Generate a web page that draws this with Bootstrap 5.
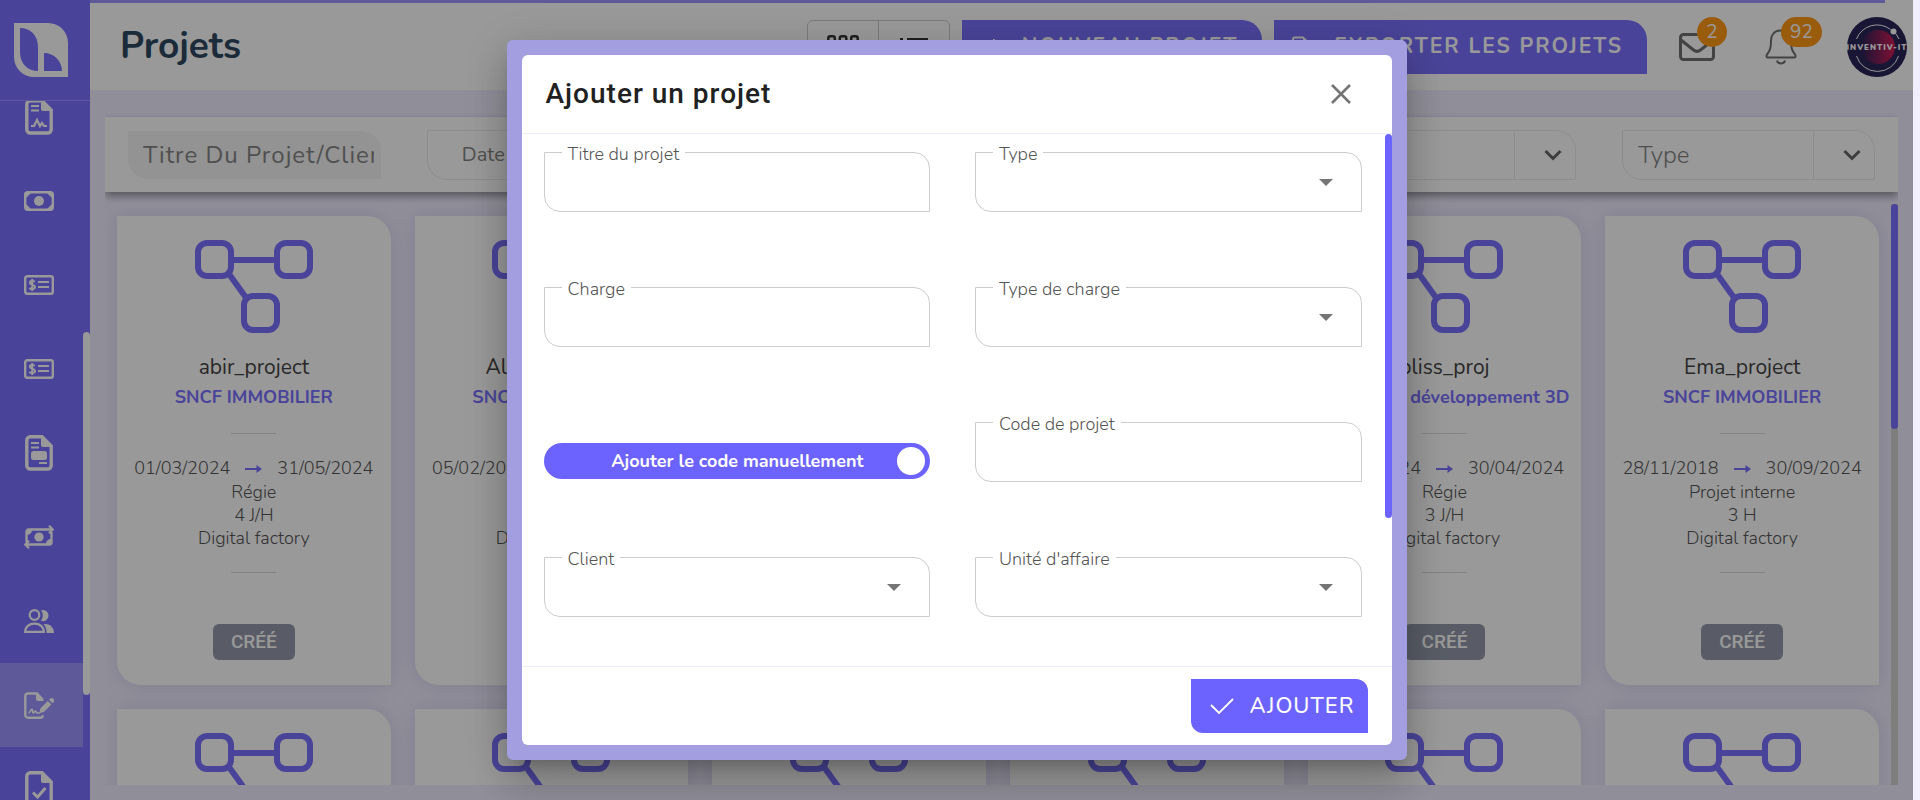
<!DOCTYPE html>
<html lang="fr">
<head>
<meta charset="utf-8">
<meta name="viewport" content="width=device-width, initial-scale=1">
<title>Projets</title>
<link href="https://cdn.jsdelivr.net/npm/bootstrap@5.3.0/dist/css/bootstrap.min.css" rel="stylesheet">
<style>
:root { --brand: #7b71ff; --brand-strong: #6c63ff; --lilac: #f0eeff; --leaf: 20px; }
body { font-family: Nunito, Lato, sans-serif; font-weight: 300; background: var(--lilac); padding-right: 7px; color: #555; }
.leaf { border-radius: 0 var(--leaf) 0 var(--leaf); }

/* sidebar */
.side { width: 90px; background: var(--brand); color: #fff; }
.side-logo { height: 102px; border-bottom: 1px solid #9d94ff; padding: 23px 14px; }
.side-scroll { min-height: 0; }
.side-list { margin-top: -26px; }
.side-list a { height: 84px; padding-right: 5px; color: #fff; }
.side-list a.active { background: #9d94ff; }
.side-track { width: 7px; padding-top: 231px; }
.side-thumb { height: 363px; border-radius: 4px; background: #fff; }

/* top bar */
.page { min-width: 0; }
.loading { height: 3px; margin-right: 28px; background: #9d94ff; }
.top { height: 87px; padding: 0 6px 0 30px; }
.top h1 { font-size: 37px; font-weight: 700; color: #2f4961; }
.views { height: 54px; }
.views .btn { width: 72px; border: 1px solid #ccc; color: #333; }
.act { height: 54px; padding: 0 24px 0 18px; border: 0; background: var(--brand); color: #fff; font-size: 21px; font-weight: 700; letter-spacing: 2px; }
.act svg { margin-right: 14px; }
.alert-btn { width: 36px; height: 60px; color: #707070; }
.count { top: 0; left: 18px; height: 30px; min-width: 30px; padding: 0 9px; border-radius: 15px; background: #ff9917; color: #fff; font-size: 19px; line-height: 30px; font-weight: 400; }

/* filters */
.content { min-height: 0; padding: 27px 15px 0; }
.filters { height: 75px; box-shadow: 0 4px 8px rgba(0,0,0,.4); clip-path: inset(-4px 0 -16px 0); z-index: 1; }
.filters .col { padding: 0 23px; }
.filters input, .filters .pick { height: 50px; border: 1px solid #ebebeb; background: #fff; }
.filters input { color: #777; font-size: 20px; padding: 0 34px; }
.filters input.search { height: 48px; border: 0; background: #f5f5f5; font-size: 24px; letter-spacing: 1px; padding: 0 7px 0 15px; }
.filters ::placeholder { color: #858585; opacity: 1; }
.pick select { border: 0; background: none; appearance: none; font-size: 24px; color: #858585; padding-left: 15px; font-weight: 300; }
.pick span { width: 61px; border-left: 1px solid #ebebeb; color: #666; pointer-events: none; }

/* project cards */
.board { padding-bottom: 15px; min-height: 0; }
.grid-clip { overflow: hidden; min-width: 0; padding-top: 12px; }
.proj-row { --bs-gutter-y: 0px; row-gap: 24px; }
.proj { height: 469px; background: #fff; border-radius: 0 24px 0 24px; box-shadow: 0 0 20px rgba(80,70,140,.16); padding-top: 24px; color: #555; font-size: 18px; line-height: 23px; }
.proj h2 { font-size: 21px; line-height: 24px; font-weight: 400; color: #444; margin: 22px 0 6px; }
.proj .firm { font-weight: 700; line-height: 24px; }
.proj .firm, .proj svg { color: var(--brand); }
.proj hr { width: 45px; margin: 24px auto 23px; border-color: #666; }
.proj hr.low { margin-top: 22px; }
.proj .dates { margin-bottom: 1px; gap: 15px; }
.proj .state { background: #949aaa; color: #fff; font: 500 19px/36px Roboto, sans-serif; border-radius: 6px; padding: 0 18px; margin-top: 28px; }
.track { width: 7px; background: #d2d2cf; flex-shrink: 0; }
.track div { height: 225px; border-radius: 4px; background: var(--brand); }

/* dialog */
.shade { background: rgba(0,0,0,.4); right: 7px; width: auto; z-index: 1050; }
.dlg { width: 900px; max-width: 100%; height: 90vh; border: 15px solid #a39edf; border-radius: 6px; background: #a39edf; box-shadow: 0 11px 15px -7px rgba(0,0,0,.2), 0 24px 38px 3px rgba(0,0,0,.14), 0 9px 46px 8px rgba(0,0,0,.12); }
.sheet { background: #fff; border-radius: 6px; }
.dlg-head { height: 79px; padding: 0 37px 0 24px; border-bottom: 1px solid #ededfb; }
.dlg-head h2 { font: 500 28px/36px Roboto, sans-serif; letter-spacing: 1px; color: #212121; }
.dlg-body { min-height: 0; overflow: hidden; }
.fields { padding: 18px 23px 0 22px; column-gap: 45px; row-gap: 75px; display: grid; grid-template-columns: 1fr 1fr; align-content: start; }
.field { height: 60px; }
.field input, .field select { height: 60px; border: 1px solid #ccc; border-radius: 0 16px 0 16px; background: #fff; font-size: 20px; padding: 0 20px; appearance: none; }
.field label { top: -9px; left: 18px; padding: 0 6px; background: #fff; font-size: 18px; line-height: 22px; color: #555; }
.field.drop::after { content: ""; position: absolute; right: 29px; top: 27px; border: 7px solid transparent; border-top-color: #757575; border-bottom: 0; }
.switch { height: 36px; border-radius: 18px; background: var(--brand-strong); color: #fff; font-size: 18px; font-weight: 700; margin-top: 21px; padding: 0 5px 0 34px; cursor: pointer; }
.switch input { appearance: none; width: 28px; height: 28px; border-radius: 50%; background: #fff; margin: 0; }
.dlg-track { width: 7px; flex-shrink: 0; }
.dlg-thumb { height: 384px; border-radius: 4px; background: var(--brand-strong); }
.dlg-foot { height: 79px; padding-right: 24px; border-top: 1px solid #ededfb; }
.dlg-foot .btn { height: 54px; border-radius: 0 12px 0 12px; background: var(--brand-strong); color: #fff; font-size: 22px; font-weight: 500; letter-spacing: 1px; padding: 0 13px 0 19px; border: 0; }
</style>
</head>
<body class="vh-100 overflow-hidden">
<svg class="d-none">
  <symbol id="i-net" viewBox="0 0 118 93"><g fill="none" stroke="currentColor" stroke-width="6"><rect x="3" y="3" width="33" height="33" rx="9"/><rect x="82" y="3" width="33" height="33" rx="9"/><rect x="49" y="56" width="33" height="34" rx="9"/><path d="M37 20h44M34 34l18 25"/></g></symbol>
  <symbol id="i-arrow" viewBox="0 0 17 8"><path d="M0 4h13" stroke="currentColor" stroke-width="2"/><path d="M11.500 0L17 4l-5.500 4z" fill="currentColor"/></symbol>
  <symbol id="i-down" viewBox="0 0 18 12"><path d="M1.500 2L9 9.500 16.500 2" fill="none" stroke="currentColor" stroke-width="3"/></symbol>
  <symbol id="i-page" viewBox="0 0 28 36"><path d="M4 1.800h13l9.200 9.200v19.500a3.500 3.500 0 0 1-3.500 3.500H5.300a3.500 3.500 0 0 1-3.500-3.500V5.300A3.500 3.500 0 0 1 5.300 1.800z" fill="none" stroke="currentColor" stroke-width="3.400"/><path d="M16 1.500V10a2 2 0 0 0 2 2h9z" fill="currentColor"/></symbol>
  <symbol id="i-cheque" viewBox="0 0 30 20"><rect x="1.200" y="1.200" width="27.600" height="17.600" rx="2" fill="none" stroke="currentColor" stroke-width="2.400"/><path d="M10.800 6.800C9.500 5.700 5.800 5.500 5.800 7.800c0 2.500 5.200 1.600 5.200 4.200 0 2.400-4 2.400-5.700 1M8.200 4v12M14 7h11M14 12h11" fill="none" stroke="currentColor" stroke-width="2"/></symbol>
</svg>

<div class="d-flex h-100">
  <nav class="side d-flex flex-column flex-shrink-0" aria-label="Menu">
    <a class="side-logo d-block text-white" href="#" aria-label="Accueil"><svg width="54" height="54" viewBox="0 0 54 54"><path fill="currentColor" fill-rule="evenodd" d="M0 0h34a20 20 0 0 1 20 20v34H20A20 20 0 0 1 0 34zM6 5v24c0 12 8 19 18 19V24C24 12 16 5 6 5zM30 30v18h18c0-10-8-18-18-18z"/></svg></a>
    <div class="side-scroll d-flex flex-grow-1 overflow-hidden">
      <div class="side-list flex-grow-1">
        <a href="#" aria-label="Contrats" class="d-flex align-items-center justify-content-center"><svg width="28" height="36" viewBox="0 0 28 36"><use href="#i-page"/><path d="M6 7h8M6 11.500h8M6 27h3l3-6 3 6 2-3 2 3h3" fill="none" stroke="currentColor" stroke-width="2.200"/></svg></a>
        <a href="#" aria-label="Factures" class="d-flex align-items-center justify-content-center"><svg width="30" height="20" viewBox="0 0 30 20"><rect x="1.200" y="1.200" width="27.600" height="17.600" rx="2.500" fill="none" stroke="currentColor" stroke-width="2.400"/><circle cx="15" cy="10" r="5" fill="currentColor"/><path d="M2 2h5l-5 5zM28 2h-5l5 5zM2 18h5l-5-5zM28 18h-5l5-5z" fill="currentColor"/></svg></a>
        <a href="#" aria-label="Paiements" class="d-flex align-items-center justify-content-center"><svg width="30" height="20"><use href="#i-cheque"/></svg></a>
        <a href="#" aria-label="Chèques" class="d-flex align-items-center justify-content-center"><svg width="30" height="20"><use href="#i-cheque"/></svg></a>
        <a href="#" aria-label="Devis" class="d-flex align-items-center justify-content-center"><svg width="28" height="36" viewBox="0 0 28 36"><use href="#i-page"/><path d="M6 8h8M6 12.500h8M14 28h8" fill="none" stroke="currentColor" stroke-width="2.200"/><rect x="6" y="16" width="16" height="9" rx="2.500" fill="currentColor"/></svg></a>
        <a href="#" aria-label="Virements" class="d-flex align-items-center justify-content-center"><svg width="30" height="24" viewBox="0 0 30 24"><g fill="none" stroke="currentColor" stroke-width="2.300"><path d="M2.500 17V6.500a2 2 0 0 1 2-2H29M25 .8L28.700 4.500 25 8.200M27.500 7v10.500a2 2 0 0 1-2 2H1M5 15.800L1.300 19.500 5 23.200"/></g><circle cx="15" cy="12" r="4.600" fill="currentColor"/><path d="M3 5h5a5 5 0 0 1-5 5zM27 19h-5a5 5 0 0 1 5-5z" fill="currentColor"/></svg></a>
        <a href="#" aria-label="Équipe" class="d-flex align-items-center justify-content-center"><svg width="30" height="24" viewBox="0 0 30 24"><g fill="none" stroke="currentColor" stroke-width="2.200"><circle cx="10.500" cy="6" r="4.800"/><path d="M1.200 22.800c0-5 4-8.200 9.300-8.200s9.300 3.200 9.300 8.200z"/></g><path d="M17 1.500a5.500 5.500 0 1 1 0 10.200 8 8 0 0 0 0-10.200zM19.500 15c6-.6 10.500 2.800 10.500 9h-7.500c.2-4-1-7-3-9z" fill="currentColor"/></svg></a>
        <a href="#" aria-label="Projets" class="active d-flex align-items-center justify-content-center"><svg width="30" height="27" viewBox="0 0 30 27"><path d="M19 8l-6-6.500H4A2.700 2.700 0 0 0 1.300 4v19A2.700 2.700 0 0 0 4 25.700h12.500a2.500 2.500 0 0 0 2.300-2.500" fill="none" stroke="currentColor" stroke-width="2.400"/><path d="M12 1v6a2 2 0 0 0 2 2h6zM15.500 21l.8-4.500 7.500-7.500 3.600 3.600-7.500 7.500zM25 7.800l1-1a2.300 2.300 0 0 1 3.400 3.400l-1 1z" fill="currentColor"/><path d="M4.500 21c1.500 0 2.500-4 3.500-4s0 4 1.200 4 1-2 2-2 .8 2 2 2h3" fill="none" stroke="currentColor" stroke-width="1.600"/></svg></a>
        <a href="#" aria-label="Validations" class="d-flex align-items-center justify-content-center"><svg width="28" height="36" viewBox="0 0 28 36"><use href="#i-page"/><path d="M8 21.500l4.500 4.500 8-9" fill="none" stroke="currentColor" stroke-width="3"/></svg></a>
      </div>
      <div class="side-track"><div class="side-thumb"></div></div>
    </div>
  </nav>

  <div class="page d-flex flex-column flex-grow-1 h-100">
    <header class="bg-white">
      <div class="loading"></div>
      <div class="top d-flex align-items-center">
        <h1 class="m-0 me-auto">Projets</h1>
        <div class="views btn-group me-2 pe-1">
          <button class="btn" type="button" aria-label="Grille"><svg width="32" height="32" viewBox="0 0 32 32" fill="none" stroke="currentColor" stroke-width="2.500"><rect x="1.300" y="5.300" width="6.500" height="9" rx="2"/><rect x="12.800" y="5.300" width="6.500" height="9" rx="2"/><rect x="24.200" y="5.300" width="6.500" height="9" rx="2"/><rect x="1.300" y="19" width="6.500" height="9" rx="2"/><rect x="12.800" y="19" width="6.500" height="9" rx="2"/><rect x="24.200" y="19" width="6.500" height="9" rx="2"/></svg></button>
          <button class="btn" type="button" aria-label="Liste"><svg width="28" height="24" viewBox="0 0 28 24" stroke="currentColor" stroke-width="4"><path d="M0 5h3M7 5h21M0 13h3M7 13h21M0 21h3M7 21h21"/></svg></button>
        </div>
        <button class="act leaf me-2" type="button"><svg width="28" height="18" viewBox="0 0 28 18" stroke="currentColor" stroke-width="2"><path d="M14 0v18M5 9h18"/></svg>NOUVEAU PROJET</button>
        <button class="act leaf ms-1 me-4" type="button"><svg width="28" height="24" viewBox="0 0 28 24"><path d="M2.500 1.500H11l5.500 5.500v13.500a2 2 0 0 1-2 2h-12a1.500 1.500 0 0 1-1.500-1.500V3a1.500 1.500 0 0 1 1.500-1.500z" fill="none" stroke="currentColor" stroke-width="2"/><path d="M11 1v6h6z" fill="currentColor"/></svg>EXPORTER LES PROJETS</button>
        <button class="alert-btn btn p-0 border-0 position-relative ms-2 me-5" type="button" aria-label="Messages"><svg width="36" height="28" viewBox="0 0 36 28" fill="none" stroke="currentColor" stroke-width="3"><rect x="1.500" y="1.500" width="33" height="25" rx="3"/><path d="M2 7l12.500 10c2.500 2 4.500 2 7 0L34 7"/></svg><span class="count position-absolute">2</span></button>
        <button class="alert-btn btn p-0 border-0 position-relative me-5" type="button" aria-label="Notifications"><svg width="32" height="36" viewBox="0 0 32 36" fill="none" stroke="currentColor" stroke-width="2"><path d="M16 1.500C9 1.500 6 6.500 6 12c0 8-1.500 10-4 13.500-1 1.500-.5 3 1 3h26c1.500 0 2-1.500 1-3-2.500-3.500-4-5.500-4-13.500 0-5.500-3-10.500-10-10.500zM12 31.500c1 4 7 4 8 0"/></svg><span class="count position-absolute">92</span></button>
        <a href="#" aria-label="Compte"><svg class="d-block" width="60" height="60" viewBox="0 0 60 60"><defs><linearGradient id="g"><stop offset="0" stop-color="#2a2358"/><stop offset="1" stop-color="#d21b55"/></linearGradient></defs><circle cx="30" cy="30" r="30" fill="#2a2358"/><circle cx="31" cy="30" r="17" fill="url(#g)"/><path d="M9.500 22a22 22 0 0 1 34-9.500M49 17l3 5M9.500 39a22 22 0 0 0 42 0" fill="none" stroke="#fff" stroke-width="1"/><circle cx="46.500" cy="14.500" r="3" fill="#fff"/><text x="30" y="33" text-anchor="middle" fill="#fff" font-size="8" font-weight="900" letter-spacing="1">INVENTIV-IT</text></svg></a>
      </div>
    </header>

    <main class="content d-flex flex-column flex-grow-1">
      <form class="filters bg-white d-flex align-items-center flex-shrink-0 position-relative">
        <div class="col"><input class="search leaf w-100" type="text" placeholder="Titre Du Projet/Client" aria-label="Titre du projet ou client"></div>
        <div class="col"><input class="leaf w-100" type="text" placeholder="Date de début" aria-label="Date de début"></div>
        <div class="col"><input class="leaf w-100" type="text" placeholder="Date de fin" aria-label="Date de fin"></div>
        <div class="col"><div class="pick leaf d-flex"><select class="flex-grow-1" aria-label="Client"><option>Client</option></select><span class="d-flex align-items-center justify-content-center ps-3"><svg width="18" height="12"><use href="#i-down"/></svg></span></div></div>
        <div class="col"><div class="pick leaf d-flex"><select class="flex-grow-1" aria-label="Statut"><option>Statut</option></select><span class="d-flex align-items-center justify-content-center ps-3"><svg width="18" height="12"><use href="#i-down"/></svg></span></div></div>
        <div class="col"><div class="pick leaf d-flex"><select class="flex-grow-1" aria-label="Type"><option>Type</option></select><span class="d-flex align-items-center justify-content-center ps-3"><svg width="18" height="12"><use href="#i-down"/></svg></span></div></div>
      </form>
      <div class="board d-flex flex-grow-1 pt-2 mt-1">
        <div class="grid-clip flex-grow-1"><div class="proj-row row row-cols-6 g-4 m-0" id="grid"></div></div>
        <div class="track"><div></div></div>
      </div>
    </main>
  </div>
</div>

<div class="shade modal d-flex align-items-center justify-content-center" role="dialog" aria-modal="true" aria-labelledby="dlgTitle">
  <div class="dlg">
    <form class="sheet d-flex flex-column h-100">
      <div class="dlg-head d-flex align-items-center justify-content-between flex-shrink-0">
        <h2 id="dlgTitle" class="m-0">Ajouter un projet</h2>
        <button class="btn p-1 border-0" type="button" aria-label="Fermer"><svg class="d-block" width="20" height="20" viewBox="0 0 20 20"><path d="M1 1l18 18M19 1L1 19" stroke="#757575" stroke-width="2.600"/></svg></button>
      </div>
      <div class="dlg-body d-flex flex-grow-1">
        <div class="fields flex-grow-1">
          <div class="field position-relative"><input class="w-100" id="f1" type="text"><label class="position-absolute" for="f1">Titre du projet</label></div>
          <div class="field drop position-relative"><select class="w-100" id="f2"><option></option></select><label class="position-absolute" for="f2">Type</label></div>
          <div class="field position-relative"><input class="w-100" id="f3" type="text"><label class="position-absolute" for="f3">Charge</label></div>
          <div class="field drop position-relative"><select class="w-100" id="f4"><option></option></select><label class="position-absolute" for="f4">Type de charge</label></div>
          <label class="switch d-flex align-items-center" for="f5"><span class="flex-grow-1 text-center">Ajouter le code manuellement</span><input id="f5" type="checkbox" role="switch" checked></label>
          <div class="field position-relative"><input class="w-100" id="f6" type="text"><label class="position-absolute" for="f6">Code de projet</label></div>
          <div class="field drop position-relative"><select class="w-100" id="f7"><option></option></select><label class="position-absolute" for="f7">Client</label></div>
          <div class="field drop position-relative"><select class="w-100" id="f8"><option></option></select><label class="position-absolute" for="f8">Unité d'affaire</label></div>
        </div>
        <div class="dlg-track"><div class="dlg-thumb"></div></div>
      </div>
      <div class="dlg-foot d-flex align-items-center justify-content-end flex-shrink-0">
        <button class="btn d-flex align-items-center gap-3" type="button"><svg width="24" height="18" viewBox="1 0 24 18"><path d="M2 8l8 8L24 2" fill="none" stroke="currentColor" stroke-width="1.800"/></svg>AJOUTER</button>
      </div>
    </form>
  </div>
</div>

<script>
const projects = [
  ["abir_project", "SNCF IMMOBILIER", "01/03/2024", "31/05/2024", "Régie", "4 J/H"],
  ["Alpha_project", "SNCF IMMOBILIER", "05/02/2024", "31/05/2024", "Régie", "5 J/H"],
  ["app_project", "SNCF IMMOBILIER", "01/02/2024", "30/06/2024", "Régie", "2 J/H"],
  ["beta_project", "SNCF IMMOBILIER", "01/03/2024", "31/07/2024", "Régie", "4 J/H"],
  ["bliss_proj", "Entreprise développement 3D", "01/03/2024", "30/04/2024", "Régie", "3 J/H"],
  ["Ema_project", "SNCF IMMOBILIER", "28/11/2018", "30/09/2024", "Projet interne", "3 H"]
];
const icon = '<svg class="d-block mx-auto" width="118" height="93"><use href="#i-net"/></svg>';
const card = body => `<div class="col"><article class="proj text-center">${icon}${body}</article></div>`;
const details = p => `
    <h2>${p[0]}</h2><div class="firm text-nowrap">${p[1]}</div><hr>
    <div class="dates d-flex justify-content-center align-items-center text-nowrap"><span>${p[2]}</span><svg width="17" height="8"><use href="#i-arrow"/></svg><span>${p[3]}</span></div>
    <div>${p[4]}</div><div>${p[5]}</div><div>Digital factory</div><hr class="low">
    <span class="state d-inline-block">CRÉÉ</span>`;
document.getElementById("grid").innerHTML =
  projects.map(p => card(details(p))).join("") + projects.map(() => card("")).join("");
</script>
<script src="https://cdn.jsdelivr.net/npm/bootstrap@5.3.0/dist/js/bootstrap.bundle.min.js"></script>
</body>
</html>
